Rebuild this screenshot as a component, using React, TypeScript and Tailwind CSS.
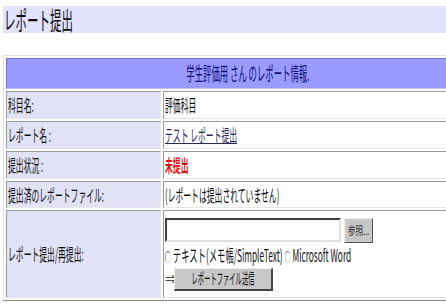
const Sx = ({ children, className = "" }: { children: React.ReactNode; className?: string }) => (
  <span className={`inline-block whitespace-nowrap origin-left scale-x-[0.46] ${className}`}>{children}</span>
);

const Radio = () => (
  <span className="inline-block w-[12px] h-[12px] rounded-full border border-t-[#555] border-l-[#555] border-b-[#ccc] border-r-[#ccc] bg-white mr-[4px] align-[-1px]" />
);

const labelCell =
  "bg-[#e2e2f6] border border-t-[#9a9a9a] border-l-[#9a9a9a] border-b-[#e8e8e8] border-r-[#e8e8e8] pl-[1px] text-[17px] text-[#111] overflow-hidden";
const valueCell =
  "bg-white border border-t-[#9a9a9a] border-l-[#9a9a9a] border-b-[#e8e8e8] border-r-[#e8e8e8] pl-[1px] text-[17px] text-[#111] overflow-hidden";

export default function App() {
  return (
    <div className="w-[446px] h-[304px] overflow-hidden bg-white font-['Noto_Sans_CJK_JP',sans-serif]">
      <div className="pt-[6px] pl-[3px]">
        <div className="h-[27px] bg-[#e2e2fc] flex items-center pl-[1px]">
          <Sx className="text-[25px] text-[#111] scale-x-[0.42]">レポート提出</Sx>
        </div>
      </div>

      <div className="mt-[22px] ml-[3px] w-[490px]">
        <table className="w-[490px] table-fixed border-separate border-spacing-[2px] border border-t-[#e0e0e0] border-l-[#e0e0e0] border-b-[#888] border-r-[#888]">
          <colgroup>
            <col className="w-[155px]" />
            <col />
          </colgroup>
          <tbody>
            <tr className="h-[28px]">
              <td
                colSpan={2}
                className="bg-[#9a9aff] text-center text-[19px] text-[#10107a] border border-t-[#7070d0] border-l-[#7070d0] border-b-[#c0c0ff] border-r-[#c0c0ff]"
              >
                <span className="inline-block whitespace-nowrap scale-x-[0.44] origin-center">学生評価用 さん のレポート情報.</span>
              </td>
            </tr>
            <tr className="h-[28px]">
              <td className={labelCell}><Sx>科目名:</Sx></td>
              <td className={valueCell}><Sx>評価科目</Sx></td>
            </tr>
            <tr className="h-[28px]">
              <td className={labelCell}><Sx>レポート名 :</Sx></td>
              <td className={valueCell}>
                <Sx className="underline text-[#2a2a55]">テスト レポート提出</Sx>
              </td>
            </tr>
            <tr className="h-[28px]">
              <td className={labelCell}><Sx>提出状況 :</Sx></td>
              <td className={valueCell}><Sx className="text-[#e01010] font-bold">未提出</Sx></td>
            </tr>
            <tr className="h-[24px]">
              <td className={labelCell}><Sx>提出済のレポートファイル:</Sx></td>
              <td className={valueCell}><Sx>(レポートは提出されていません)</Sx></td>
            </tr>
            <tr className="h-[88px]">
              <td className={labelCell}><Sx>レポート提出/再提出:</Sx></td>
              <td className={valueCell}>
                <div className="flex flex-col gap-[2px] pt-[2px] pb-[2px]">
                  <div className="flex items-center gap-[3px]">
                    <div className="w-[176px] h-[24px] bg-white border-2 border-t-[#404040] border-l-[#404040] border-b-[#e0e0e0] border-r-[#e0e0e0]" />
                    <div className="w-[29px] h-[25px] bg-[#c8c8c8] border border-t-[#eee] border-l-[#eee] border-b-[#555] border-r-[#555] flex items-center justify-center">
                      <span className="inline-block text-[11px] text-[#333] scale-x-[0.7] whitespace-nowrap">参照...</span>
                    </div>
                  </div>
                  <div className="h-[20px] flex items-center text-[17px] text-[#111]">
                    <Sx className="scale-x-[0.49]">
                      <Radio />テキスト(メモ帳/SimpleText) <Radio />Microsoft Word
                    </Sx>
                  </div>
                  <div className="flex items-center mt-[1px]">
                    <span className="text-[12px] text-[#222] w-[9px]">⇒</span>
                    <div className="w-[99px] h-[23px] bg-[#c8c8c8] border border-t-[#eee] border-l-[#eee] border-b-[#444] border-r-[#444] border-b-2 border-r-2 flex items-center justify-center">
                      <span className="inline-block whitespace-nowrap text-[15px] text-[#111] scale-x-[0.42]">レポートファイル送信</span>
                    </div>
                  </div>
                </div>
              </td>
            </tr>
          </tbody>
        </table>
      </div>
    </div>
  );
}
